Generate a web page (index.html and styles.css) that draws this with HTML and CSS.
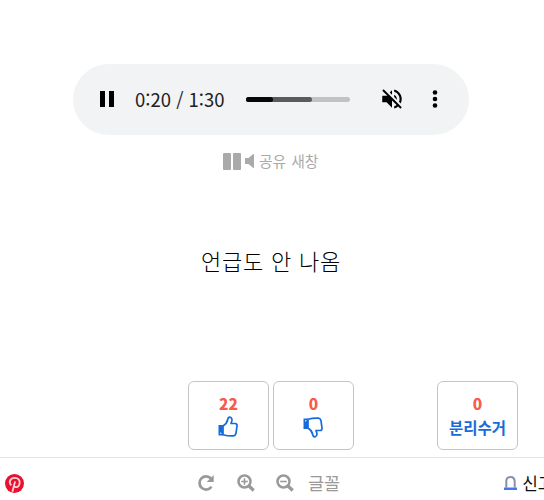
FILE: index.html
```html
<!DOCTYPE html>
<html lang="ko">
<head>
<meta charset="utf-8">
<title>언급도 안 나옴</title>
<link rel="stylesheet" href="styles.css">
</head>
<body>
<main class="post">
  <div class="player">
    <svg class="pause" viewBox="0 0 14 16"><path d="M0 0h5v16H0zM9 0h5v16H9z"/></svg>
    <span class="time">0:20 / 1:30</span>
    <div class="track"><div class="buffered"></div><div class="played"></div></div>
    <svg class="mute" viewBox="0 0 24 24"><path d="M16.5 12c0-1.77-1.02-3.29-2.5-4.03v2.21l2.45 2.45c.03-.2.05-.41.05-.63zm2.5 0c0 .94-.2 1.82-.54 2.64l1.51 1.51C20.63 14.91 21 13.5 21 12c0-4.28-2.99-7.86-7-8.77v2.06c2.89.86 5 3.54 5 6.71zM4.27 3L3 4.27 7.73 9H3v6h4l5 5v-6.73l4.25 4.25c-.67.52-1.42.93-2.25 1.18v2.06c1.38-.31 2.63-.95 3.69-1.81L19.73 21 21 19.73l-9-9L4.27 3zM12 4L9.91 6.09 12 8.18V4z"/></svg>
    <svg class="more" viewBox="0 0 6 18"><circle cx="3" cy="2.5" r="2.3"/><circle cx="3" cy="9" r="2.3"/><circle cx="3" cy="15.5" r="2.3"/></svg>
  </div>
  <div class="links">
    <svg class="links-pause" viewBox="0 0 18 17"><path d="M1 0h6q1 0 1 1v15q0 1-1 1H1q-1 0-1-1V1q0-1 1-1zM11 0h6q1 0 1 1v15q0 1-1 1h-6q-1 0-1-1V1q0-1 1-1z"/></svg>
    <svg class="links-sound" viewBox="0 0 9 14"><path d="M0 4h3.5L8 .3q1-.6 1 .5v12.4q0 1.1-1 .5L3.5 10H0z"/></svg>
    <span>공유</span><span>새창</span>
  </div>
  <p class="message">언급도 안 나옴</p>
  <div class="votes">
    <button class="vote"><b>22</b>
      <svg class="thumb" viewBox="0 0 20 21"><path class="cuff" d="M.5 9h4.6v10.5H.5z"/><path class="hand" d="M5 10Q9 7.500 9.700 3.500Q10.200 1 12 1.200Q14.500 1.800 13.800 5L13 7.500h4q2.200.2 2 2.300l-1 7.500q-.6 2.400-2.500 2.600Q10 20.200 5 18.700z"/><circle cx="2.800" cy="17.200" r=".7" fill="#fff"/></svg>
    </button>
    <button class="vote"><b>0</b>
      <svg class="thumb down" viewBox="0 0 20 21"><path class="cuff" d="M.5 9h4.6v10.5H.5z"/><path class="hand" d="M5 10Q9 7.500 9.700 3.500Q10.200 1 12 1.200Q14.500 1.800 13.800 5L13 7.500h4q2.200.2 2 2.300l-1 7.500q-.6 2.400-2.500 2.600Q10 20.200 5 18.700z"/><circle cx="2.800" cy="17.200" r=".7" fill="#fff"/></svg>
    </button>
    <button class="vote recycle"><b>0</b><span>분리수거</span></button>
  </div>
</main>
<footer class="toolbar">
  <svg class="pin" viewBox="0 0 24 24"><circle cx="12" cy="12" r="12" fill="#e8112f"/><path d="M8 14.200C4 10.500 6.500 5 12.300 5c4.400 0 6.700 2.800 6.200 6.200-.5 3.600-2.500 5.600-4.700 5.400-1.300-.1-2.200-.8-2.500-1.800M12.800 9.300L9.300 22.500" fill="none" stroke="#fbd3da" stroke-width="2.300"/></svg>
  <svg class="tool reload" viewBox="0 0 18 18"><path d="M14 4.500A6.600 6.600 0 1 0 14.500 12.800" fill="none" stroke="#999" stroke-width="2.700"/><path d="M16.700 1v7H9.700z" fill="#999"/></svg>
  <svg class="tool zoom-in" viewBox="0 0 18 18"><g fill="none" stroke="#999"><circle cx="7.500" cy="7.500" r="6" stroke-width="2.500"/><path d="M12 12l4.700 4.500" stroke-width="3.200"/><path d="M4.200 7.500h6.600M7.500 4.200v6.600" stroke-width="1.600"/></g></svg>
  <svg class="tool zoom-out" viewBox="0 0 18 18"><g fill="none" stroke="#999"><circle cx="7.500" cy="7.500" r="6" stroke-width="2.500"/><path d="M12 12l4.700 4.500" stroke-width="3.200"/><path d="M4.200 7.500h6.600" stroke-width="1.600"/></g></svg>
  <span class="font">글꼴</span>
  <svg class="siren" viewBox="0 0 13 14"><path d="M2.300 11.500V5.500Q2.300 1 6.500 1t4.200 4.500v6" fill="none" stroke="#8790a8" stroke-width="2"/><path d="M0 11.500h13V14H0z" fill="#4475f2"/></svg>
  <span class="report">신고</span>
</footer>
</body>
</html>
```
FILE: styles.css
```css
* { box-sizing: border-box; }
body {
  margin: 0;
  height: 500px;
  overflow: hidden;
  background: #fff;
  font-family: "Noto Sans CJK KR", sans-serif;
}
svg { display: block; flex: none; }
.post { height: 457px; padding-top: 64px; }
.player {
  display: flex;
  align-items: center;
  width: 396px;
  height: 71px;
  margin-left: 73px;
  padding-left: 27px;
  border-radius: 36px;
  background: #f1f3f4;
}
.pause { width: 14px; height: 16px; margin-bottom: 1px; }
.time {
  width: 90px;
  margin: 0 0 2px 21px;
  font-size: 18.5px;
  line-height: 28px;
  white-space: nowrap;
  color: #202124;
}
.track {
  display: grid;
  width: 104px;
  height: 5px;
  margin-left: 21px;
  border-radius: 3px;
  background: #c1c2c3;
  overflow: hidden;
}
.buffered, .played { grid-area: 1 / 1; border-radius: 0 3px 3px 0; }
.buffered { width: 66px; background: #5a5b5c; }
.played { width: 27px; background: #080808; }
.mute { width: 26px; height: 26px; margin: 0 0 1px 29px; }
.more { width: 6px; height: 18px; margin: 0 0 2px 27px; }
.links {
  display: flex;
  align-items: center;
  gap: 4px;
  height: 22px;
  margin: 15px 0 0 223px;
  font-size: 14.8px;
  line-height: 22px;
  color: #aaa;
}
.links svg { fill: #aaa; }
.links-pause { width: 18px; height: 17px; }
.links-sound { width: 9px; height: 14px; }
.links span { margin-left: 1px; }
.message {
  height: 34px;
  margin: 71px 0 0 201px;
  font-size: 22px;
  font-weight: 300;
  line-height: 34px;
  letter-spacing: .8px;
  white-space: nowrap;
  color: #000;
}
.votes { display: flex; gap: 4px; margin: 104px 0 0 188px; }
.vote {
  display: flex;
  flex-direction: column;
  align-items: center;
  width: 81px;
  height: 69px;
  padding: 10px 0 0;
  border: 1px solid #c4c4c4;
  border-radius: 6px;
  background: #fff;
  font: 700 15.5px/22px "Noto Sans CJK KR", sans-serif;
}
.vote b { height: 23px; color: #f65b4b; }
.vote span { line-height: 24px; white-space: nowrap; color: #176bd9; }
.recycle { margin-left: 79px; }
.thumb { width: 20px; height: 21px; transform: translate(-1px, 1px); }
.down { transform: translate(-1px, 2px) scaleY(-1); }
.cuff { fill: #176bd9; }
.hand { fill: none; stroke: #176bd9; stroke-width: 1.7; stroke-linejoin: round; }
.toolbar {
  display: flex;
  align-items: center;
  height: 43px;
  padding: 8px 0 0 5px;
  border-top: 1px solid #e5e5e5;
}
.pin { width: 19px; height: 19px; }
.tool { width: 18px; height: 18px; }
.reload { margin-left: 173px; }
.zoom-in { margin-left: 22px; }
.zoom-out { margin-left: 21px; }
.font { width: 34px; margin: 0 0 2px 14px; font-size: 17.5px; white-space: nowrap; color: #999; }
.siren { width: 13px; height: 14px; margin-left: 164px; }
.report { margin: 0 0 2px 5px; font-size: 17px; white-space: nowrap; color: #111; }
```
